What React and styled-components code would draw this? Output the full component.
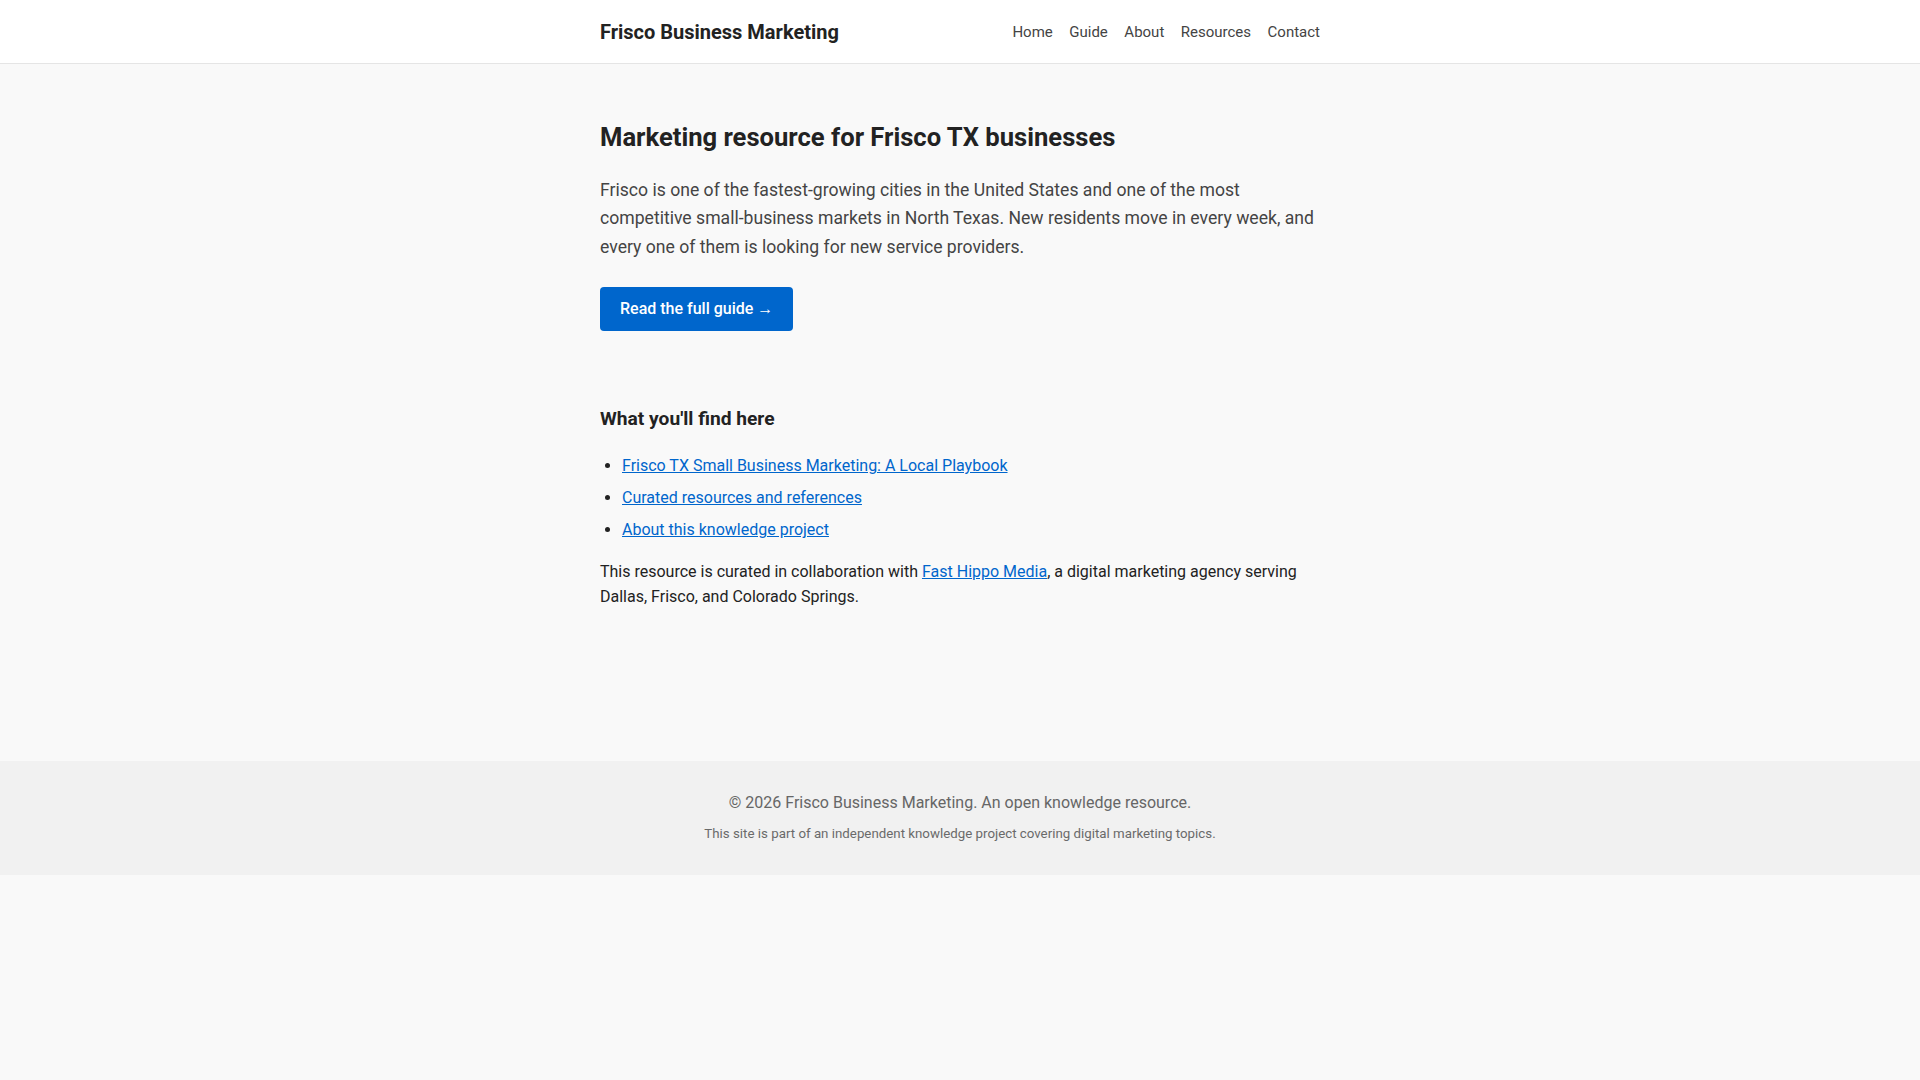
import React from "react";
import styled, { createGlobalStyle } from "styled-components";

const GlobalStyle = createGlobalStyle`
    html, body {
        margin: 0;
        padding: 0;
        background: #f9f9f9;
        font-family: Roboto, "Liberation Sans", Arial, sans-serif;
        color: #222;
    }
`;

const Header = styled.header`
    background: #fff;
    border-bottom: 1px solid #e5e5e5;
    height: 64px;
    box-sizing: border-box;
`;

const Container = styled.div`
    max-width: 720px;
    margin: 0 auto;
`;

const HeaderInner = styled(Container)`
    height: 100%;
    display: flex;
    align-items: center;
    justify-content: space-between;
`;

const Brand = styled.a`
    font-size: 20px;
    font-weight: 700;
    color: #222;
    text-decoration: none;
`;

const Nav = styled.nav`
    display: flex;
    gap: 16.5px;
`;

const NavLink = styled.a`
    font-size: 15px;
    color: #444;
    text-decoration: none;
`;

const Main = styled(Container)`
    padding: 57px 0 151px;
`;

const Title = styled.h1`
    margin: 0;
    font-size: 25.6px;
    line-height: 1.3;
    font-weight: 700;
    color: #222;
`;

const Lead = styled.p`
    margin: 22px 0 0;
    font-size: 17.6px;
    line-height: 1.6;
    color: #444;
`;

const Cta = styled.a`
    display: inline-flex;
    align-items: center;
    margin-top: 26px;
    height: 44px;
    padding: 0 20px;
    box-sizing: border-box;
    background: #0066cc;
    color: #fff;
    font-size: 16px;
    font-weight: 500;
    text-decoration: none;
    border-radius: 4px;
`;

const SectionTitle = styled.h2`
    margin: 76px 0 0;
    font-size: 19.2px;
    line-height: 1.3;
    font-weight: 700;
    color: #222;
`;

const List = styled.ul`
    margin: 21.5px 0 16px;
    padding-left: 22px;
    font-size: 16px;
    line-height: 1.6;

    li + li {
        margin-top: 6.4px;
    }
`;

const TextLink = styled.a`
    color: #0066cc;
    text-decoration: underline;
`;

const Body = styled.p`
    margin: 0;
    font-size: 16px;
    line-height: 1.6;
    color: #222;
`;

const Footer = styled.footer`
    background: #f1f1f1;
    padding: 29px 0 31px;
    text-align: center;
`;

const FooterLine = styled.p`
    margin: ${(p) => (p.small ? "7.5px 0 0" : "0")};
    font-size: ${(p) => (p.small ? "13.3px" : "16px")};
    line-height: 1.6;
    color: ${(p) => (p.small ? "#6a6a6a" : "#666")};
`;

const links = ["Home", "Guide", "About", "Resources", "Contact"];

const App = () => {
    return (
        <>
            <GlobalStyle />
            <Header>
                <HeaderInner>
                    <Brand href="#">Frisco Business Marketing</Brand>
                    <Nav>
                        {links.map((l) => (
                            <NavLink key={l} href="#">{l}</NavLink>
                        ))}
                    </Nav>
                </HeaderInner>
            </Header>

            <Main as="main">
                <Title>Marketing resource for Frisco TX businesses</Title>
                <Lead>
                    Frisco is one of the fastest-growing cities in the United States and one of the most
                    competitive small-business markets in North Texas. New residents move in every week, and
                    every one of them is looking for new service providers.
                </Lead>
                <Cta href="#">Read the full guide →</Cta>

                <SectionTitle>What you'll find here</SectionTitle>
                <List>
                    <li><TextLink href="#">Frisco TX Small Business Marketing: A Local Playbook</TextLink></li>
                    <li><TextLink href="#">Curated resources and references</TextLink></li>
                    <li><TextLink href="#">About this knowledge project</TextLink></li>
                </List>
                <Body>
                    This resource is curated in collaboration with <TextLink href="#">Fast Hippo Media</TextLink>, a
                    digital marketing agency serving Dallas, Frisco, and Colorado Springs.
                </Body>
            </Main>

            <Footer>
                <FooterLine>© 2026 Frisco Business Marketing. An open knowledge resource.</FooterLine>
                <FooterLine small>This site is part of an independent knowledge project covering digital marketing topics.</FooterLine>
            </Footer>
        </>
    );
};

export default App;
